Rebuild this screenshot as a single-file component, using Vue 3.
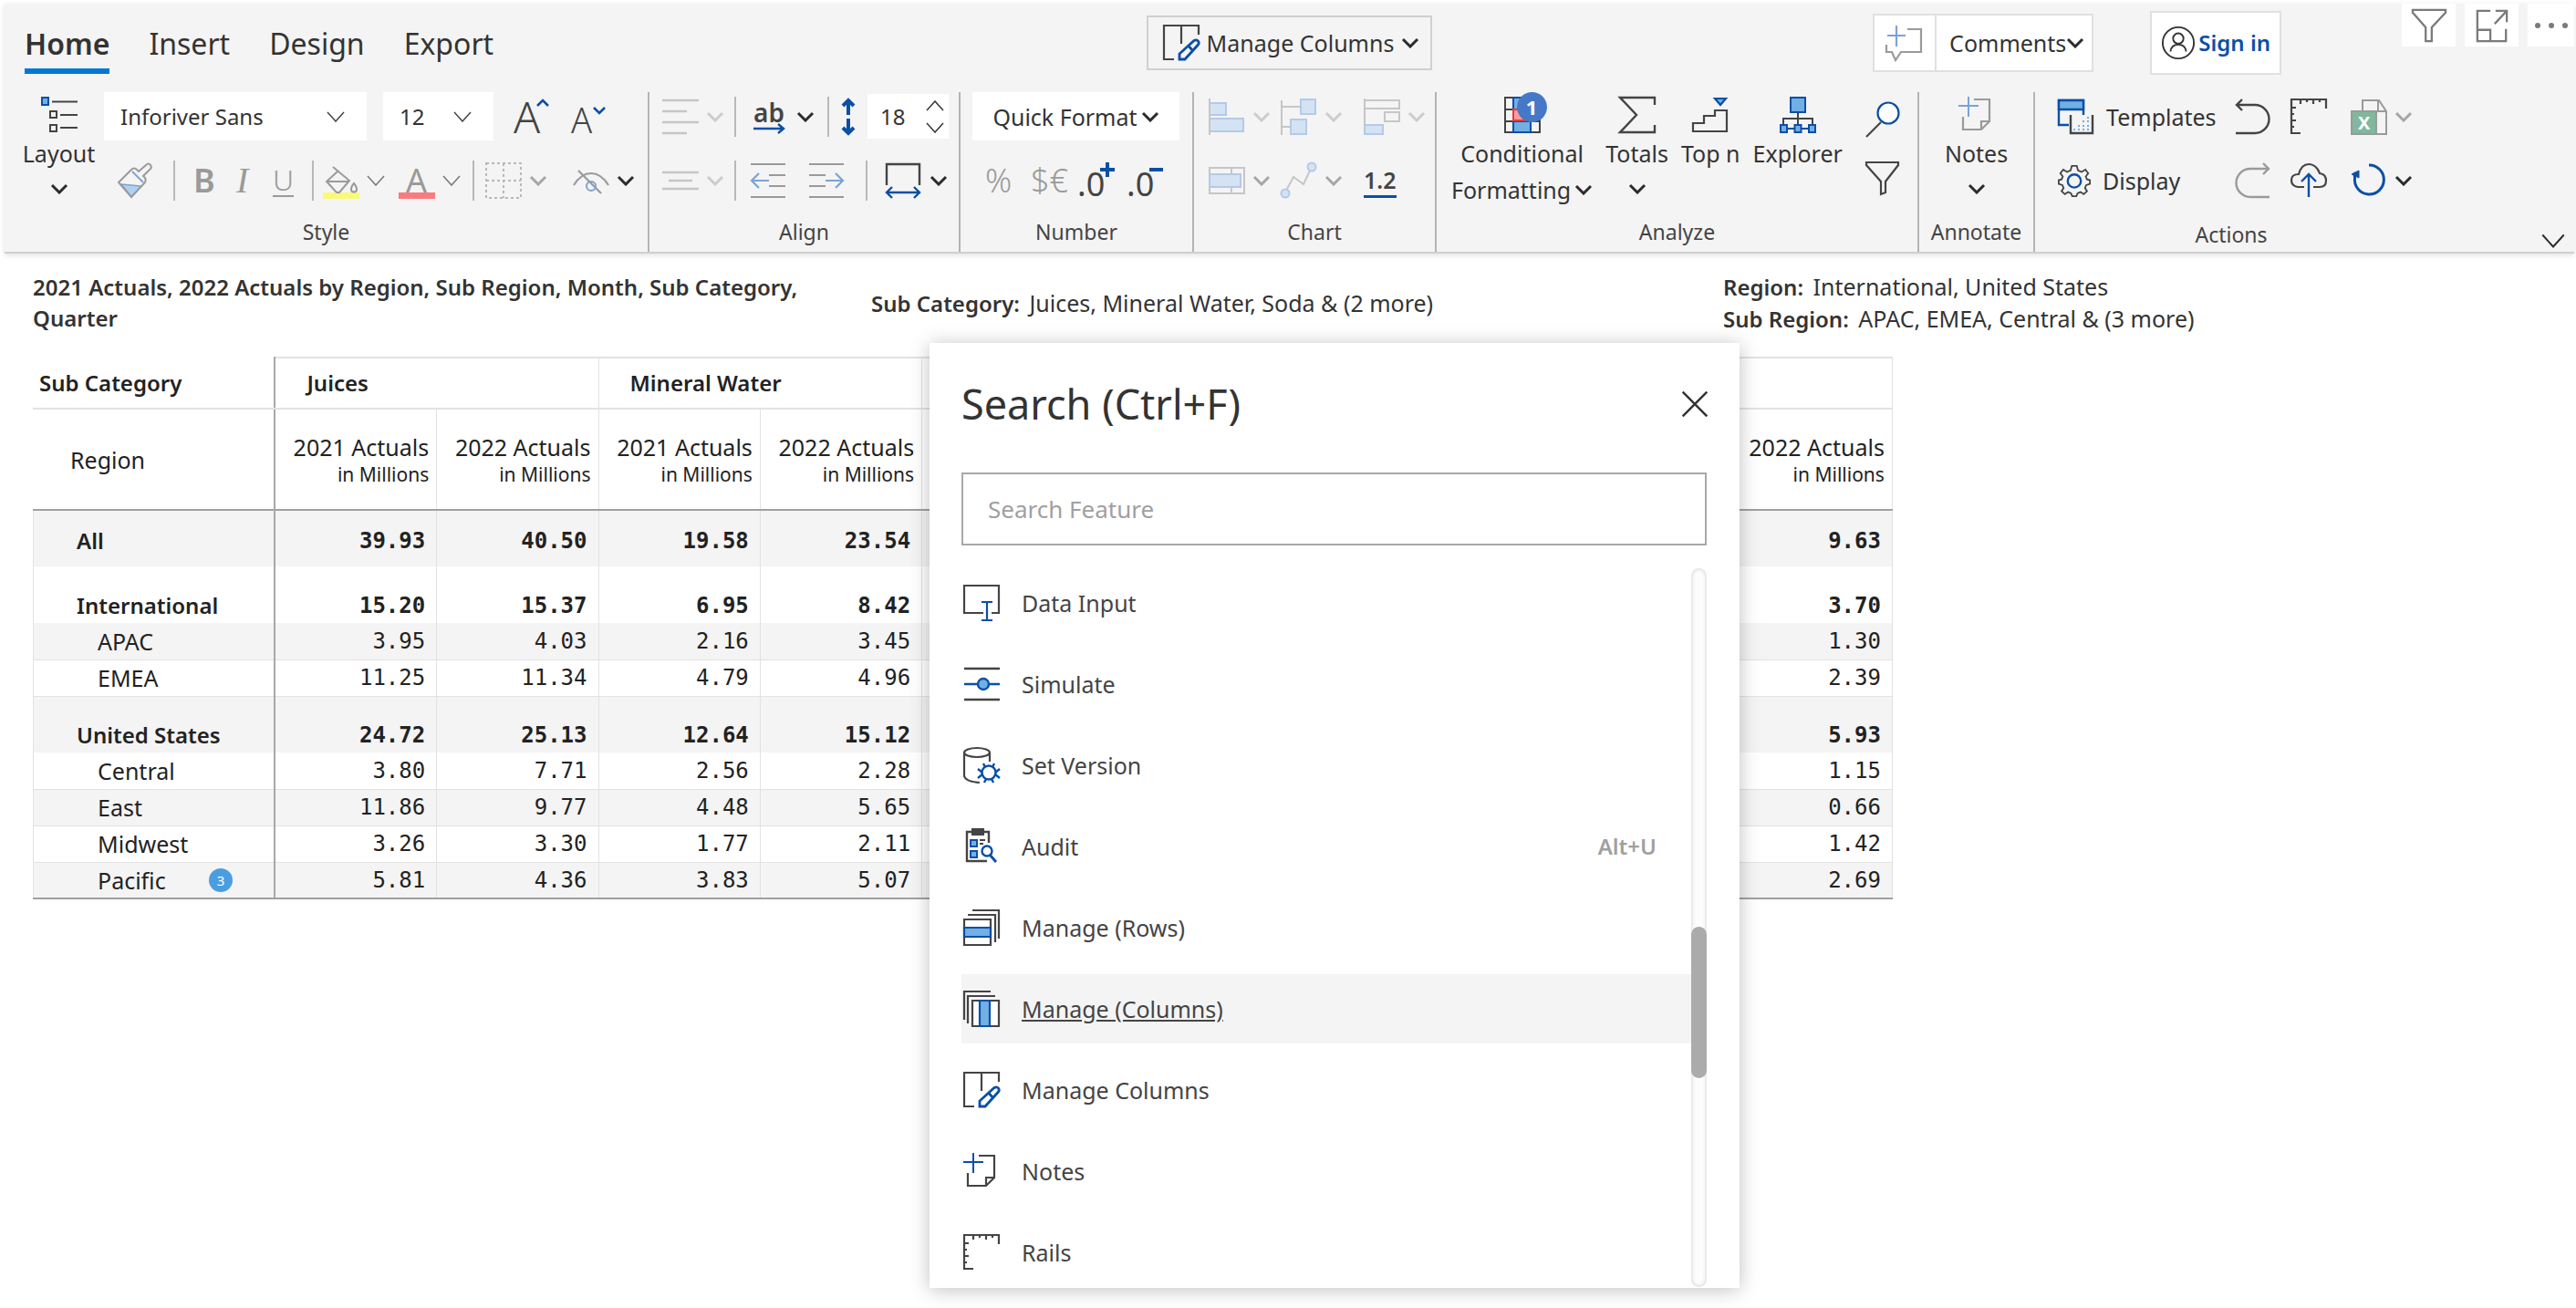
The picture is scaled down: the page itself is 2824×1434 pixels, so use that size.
<script setup>
import { h, ref } from 'vue'

const D = '#444'
const B = '#0b4fa6'
const L = '#71afe5'
const G = '#9a9a9a'
const GB = '#7ba3d4'
const dis = '#c6c6c6'
const disB = '#b4cae6'
const disL = '#d3e3f3'

const svgPath = (d, stroke = D, width = 2, fill = 'none') =>
  `<path d="${d}" stroke="${stroke}" stroke-width="${width}" fill="${fill}"/>`

const manageColumns =
  svgPath('M39 11V1H1V38H12M20 1V21', D, 2.2) +
  svgPath('M18 38V32L34 17.500Q37 16 38.500 18T38.500 22L24 38ZM28.500 24L33 29', B, 2.8)

const note = (a, b) =>
  svgPath('M17 3H34V27L25 36H5V22M25 36V27H34', a, 2.2) + svgPath('M11 0V22M0 10H22', b, 2)

const rails =
  svgPath('M11 38H1V1H39V11M11 1V6M18 1V4M25 1V6M32 1V4M1 10H6M1 17H4M1 24H6M1 31H4', D, 2.2)

const gearPath =
  'M17 2H23L24.500 7.500L29 9.500L33.500 6.500L37 11L34 15L35.500 18.500L39 19.500V24L34.500 25.500L33 29L35.500 33L31.500 36.500L27.500 34L24 35.500L22.500 39H17.500L16 35.500L12.500 34L8.500 36.500L4.500 33L7 29L5.500 25.500L1 24V19.500L4.500 18.500L6 15L3 11L6.500 6.500L11 9.500L15.500 7.500Z'

const icons = {
  layout:
    svgPath('M1 1H8V9H1Z', B, 2, L) +
    svgPath('M12 5.500H40M10 16H17V23H10ZM21 20H40M10 31H17V38H10ZM21 34H40', D),
  growA: `<text x="0" y="38" font-size="48" font-weight="300" fill="${D}">A</text>` + svgPath('M26 8L32 2L38 8', B, 2.6),
  shrinkA: `<text x="0" y="38" font-size="38" font-weight="300" fill="${D}">A</text>` + svgPath('M25 10L31 16L37 10', B, 2.6),
  brush:
    svgPath('M5 24L27 26L16 38Z', GB, 1.500, '#b0d0f0') +
    svgPath('M2 22L16 8Q19 5 22 8L24 10L32 3Q35 0 37 3Q39 6 36 8L29 15Q33 18 31 22L16 38Z', G) +
    svgPath('M17 10L29 22', GB),
  fill:
    `<rect x="0" y="33" width="40" height="7" fill="#fafa7a"/>` +
    svgPath('M11 5L29 20L18 33H15L4 21L16 10M4 21H28', G) +
    svgPath('M34 23Q29 29 32 32Q34 33 36 32Q39 29 34 23Z', G),
  fontColor:
    `<rect x="0" y="33" width="40" height="7" fill="#fa7b7f"/><text x="8" y="33" font-size="36" fill="${G}">A</text>`,
  borders: `<path d="M1 1H39V39H1ZM20 1V39M1 20H39" stroke="#b8b8b8" stroke-width="2" stroke-dasharray="3 3" fill="none"/>`,
  eye:
    svgPath('M1 25Q9 12 20 12T39 25M6 9L31 34', G, 2.2) +
    `<ellipse cx="20" cy="26" rx="5" ry="5" stroke="${GB}" stroke-width="2" fill="none"/>`,
  alignLeft: svgPath('M0 2H40M0 14H27M0 26H40M0 38H27', dis, 2.4),
  alignMid: svgPath('M0 11H40M7 20H33M0 29H40', dis, 2.4),
  ab:
    `<text x="1" y="26" font-size="28" font-weight="600" fill="${D}">ab</text>` +
    svgPath('M1 33H34M28 28L34 33L28 38', B, 2.4),
  updown:
    svgPath('M20 3V18M20 22V37M14 8L20 2L26 8M14 32L20 38L26 32', B, 4),
  outdent: svgPath('M0 2H38M20 14H38M20 26H38M0 38H38', G, 2.2) + svgPath('M1 20H20M9 12L1 20L9 28', GB, 2.2),
  indent: svgPath('M0 2H38M0 14H18M0 26H18M0 38H38', G, 2.2) + svgPath('M18 20H37M29 12L37 20L29 28', GB, 2.2),
  wrap: svgPath('M1 25V2H37V25', D, 2.4) + svgPath('M1 33H37M7 27L1 33L7 39M31 27L37 33L31 39', B, 2.4),
  decPlus: `<text x="0" y="37" font-size="36" fill="${D}">.0</text>` + svgPath('M33 0V16M25 8H41', B, 4),
  decMinus: `<text x="0" y="37" font-size="36" fill="${D}">.0</text>` + svgPath('M25 8H40', B, 4),
  bars: svgPath('M1 5H19V18H1ZM1 22H38V36H1Z', disB, 2, disL) + svgPath('M1 0V40', dis),
  boxes: svgPath('M1 2V40M1 9H22M1 31H11', dis) + svgPath('M22 1H38V17H22ZM11 23H28V39H11Z', disB, 2, disL),
  gantt: svgPath('M1 0V40M1 2H39V11H1M23 15H39V25H23Z', dis) + svgPath('M1 29H21V39H1Z', disB, 2, disL),
  table: svgPath('M1 6H39V34H1ZM25 6V34', dis) + svgPath('M1 13H35V27H1Z', disB, 2, disL),
  line:
    svgPath('M6 31L14 16L25 24L32 9', dis) +
    `<circle cx="34" cy="5" r="4.500" stroke="${disB}" stroke-width="2" fill="${disL}"/><circle cx="5" cy="34" r="4.500" stroke="${disB}" stroke-width="2" fill="${disL}"/>`,
  cond:
    svgPath('M1 1H39V39H1ZM1 14H39M1 27H39', D) +
    svgPath('M10 1H29V14H10ZM10 27H29V39H10Z', B, 2, L) +
    svgPath('M10 14H24V26H10Z', '#e8383d', 2, '#ff9a9a'),
  sigma: svgPath('M39 9V1H1L19 20L1 39H39V31', D, 2.4),
  topn: svgPath('M1 38V29H13V21H25V15H38V38Z', D, 2.2) + svgPath('M25 2H37L31 9Z', B, 2.2, L),
  explorer:
    svgPath('M20 18V32M4 31V24H36V31', D) +
    svgPath('M4 35H36', B) +
    svgPath('M12 1H28V17H12ZM1 31H8V39H1ZM16.500 31H23.500V39H16.500ZM32 31H39V39H32Z', B, 2, L),
  search: svgPath('M2 39L18 23', D, 2.2) + `<circle cx="26" cy="13" r="11.500" stroke="${B}" stroke-width="2.200" fill="#fff"/>`,
  funnel: svgPath('M2 3H37V6L23 24V36L18 38V24L2 6Z', D, 2.2),
  noteGray: note(G, GB),
  note: note(D, B),
  templates:
    svgPath('M12 29H1V2H28V18', B, 2.4) + svgPath('M1 2H28V12H1Z', B, 2.4, L) +
    svgPath('M14 18V38H38V18', D, 2.4) +
    `<path d="M17 34H36M22 30H36M27 25H36M32 21H36" stroke="${L}" stroke-width="2" stroke-dasharray="2 3" fill="none"/>`,
  gear: svgPath(gearPath, D, 2) + `<circle cx="20" cy="20.500" r="8" stroke="${B}" stroke-width="2.600" fill="none"/>`,
  undo: svgPath('M8 1L2 7L8 13M2 7H22A15.500 15.500 0 0 1 22 38H1', D, 2.4),
  redo: svgPath('M31 1L37 7L31 13M37 7H17A15.500 15.500 0 0 0 17 38H38', G, 2.4),
  rails,
  excel:
    svgPath('M13 14V2H31L39 14V39H14M30 2V14H39', G, 2) +
    `<rect x="1" y="14" width="27" height="25" fill="#7fb89d" stroke="${G}" stroke-width="2"/><text x="8" y="34" font-size="20" font-weight="700" fill="#fff">X</text>`,
  cloud:
    svgPath('M15 27H8Q1 26 1 19.500T9 13Q12 2 20 2T32 12Q39 13 39 20T32 27H25', D, 2.2) +
    svgPath('M20 38V13M12 21L20 13L28 21', B, 2.4),
  refresh: svgPath('M20 3A16 16 0 1 1 4.500 17Q4 14 5 11', B, 3) + svgPath('M1 13L9 9V17Z', B, 1, B),
  comment: svgPath('M24 5H39V30H17L11 39L7 30H1V22', G, 2.2) + svgPath('M12 1V24M2 12H22', GB, 2.2),
  user:
    `<circle cx="20" cy="20" r="18" stroke="#333" stroke-width="2" fill="none"/><circle cx="20" cy="15" r="6" stroke="#333" stroke-width="2" fill="none"/>` +
    svgPath('M11 30Q12 22 20 22T29 30', '#333'),
  filterGray: svgPath('M1 2H39V5L23 22V38H16V22L1 5Z', '#7a7a7a', 2.4),
  expand: svgPath('M18 3H3V38H36V24M3 25H18V38M24 3H37V16M37 3L23 18', '#7a7a7a', 2.4),
  close: svgPath('M6 6L34 34M34 6L6 34', '#333', 2.6),
  manageColumns,
  dataInput:
    svgPath('M22 31H1V1H39V31H31', D, 2.2) + svgPath('M26 19V38M20 19H32M20 39H32', B, 2.2),
  simulate:
    svgPath('M1 3H40M1 37H40', D, 2.4) + svgPath('M1 20H40', B, 2.4) +
    `<circle cx="22" cy="20" r="6" stroke="${B}" stroke-width="2.400" fill="${L}"/>`,
  version:
    svgPath('M1 6V32Q3 38 18 39M29 6V16', D, 2.2) +
    `<ellipse cx="15" cy="6" rx="14" ry="5" stroke="${D}" stroke-width="2.200" fill="none"/><circle cx="28" cy="28" r="7.500" stroke="${B}" stroke-width="2.400" fill="none"/>` +
    svgPath('M24 22L22 18M32 22L34 18M21 28L16 24M35 28L40 24M21 30L16 34M35 30L40 34M25 35L23 39M31 35L33 39', B, 2.4),
  audit:
    svgPath('M26 36H4V4H28V16', D, 2.4) + `<rect x="9" y="0" width="14" height="8" fill="${D}"/>` +
    svgPath('M8 13H15V20H8ZM8 25H15V32H8Z', B, 2, L) + svgPath('M18 13H24M18 17H22', D) +
    `<circle cx="26" cy="25" r="5.500" stroke="${B}" stroke-width="2.400" fill="none"/>` + svgPath('M29 29L36 37', B, 2.8),
  manageRows:
    svgPath('M10 1H39V32M5 6H35V36', D, 2.2) + svgPath('M1 11H30V39H1Z', D, 2.2, '#fff') +
    svgPath('M1 20H30V30H1Z', B, 2.2, L),
  manageCols:
    svgPath('M1 32V1H30M5 36V6H35', D, 2.2) + svgPath('M10 11H39V39H10Z', D, 2.2, '#fff') +
    svgPath('M18 11H29V39H18Z', B, 2.2, L)
}

const Ico = (p) => h('svg', {
  viewBox: '0 0 40 40', width: p.size || 40, height: p.size || 40,
  'aria-hidden': 'true', overflow: 'visible', innerHTML: icons[p.name]
})
Ico.props = ['name', 'size']

const Chev = (p) => h('svg', {
  viewBox: '0 0 20 12', width: 20, height: 12, 'aria-hidden': 'true', fill: 'none',
  stroke: p.color || '#2b2b2b', 'stroke-width': p.thin ? 1.5 : 3
}, [h('path', { d: p.up ? 'M1 11L10 1L19 11' : p.thin ? 'M1 1L10 11L19 1' : 'M2 2L10 10L18 2' })])
Chev.props = { color: String, thin: Boolean, up: Boolean }

const tabs = ['Home', 'Insert', 'Design', 'Export']
const query = ref('')

const features = [
  { icon: 'dataInput', label: 'Data Input' },
  { icon: 'simulate', label: 'Simulate' },
  { icon: 'version', label: 'Set Version' },
  { icon: 'audit', label: 'Audit', key: 'Alt+U' },
  { icon: 'manageRows', label: 'Manage (Rows)' },
  { icon: 'manageCols', label: 'Manage (Columns)', active: true },
  { icon: 'manageColumns', label: 'Manage Columns' },
  { icon: 'note', label: 'Notes' },
  { icon: 'rails', label: 'Rails' }
]

const categories = ['Juices', 'Mineral Water', '', '', '']
const measures = ['2021 Actuals', '2022 Actuals', '2021 Actuals', '2022 Actuals', '', '', '', '', '', '2022 Actuals']
const rows = [
  { name: 'All', kind: 'total', v: ['39.93', '40.50', '19.58', '23.54', '9.63'] },
  { name: 'International', kind: 'parent', v: ['15.20', '15.37', '6.95', '8.42', '3.70'] },
  { name: 'APAC', v: ['3.95', '4.03', '2.16', '3.45', '1.30'] },
  { name: 'EMEA', v: ['11.25', '11.34', '4.79', '4.96', '2.39'] },
  { name: 'United States', kind: 'parent', v: ['24.72', '25.13', '12.64', '15.12', '5.93'] },
  { name: 'Central', v: ['3.80', '7.71', '2.56', '2.28', '1.15'] },
  { name: 'East', v: ['11.86', '9.77', '4.48', '5.65', '0.66'] },
  { name: 'Midwest', v: ['3.26', '3.30', '1.77', '2.11', '1.42'] },
  { name: 'Pacific', badge: 3, v: ['5.81', '4.36', '3.83', '5.07', '2.69'] }
]
const cell = (row, i) => (i < 4 ? row.v[i] : i === 9 ? row.v[4] : '')
</script>

<template>
  <div class="page">
    <header class="ribbon">
      <div class="topbar">
        <nav class="tabs">
          <a v-for="(t, i) in tabs" :key="t" href="#" :class="{ current: i === 0 }">{{ t }}</a>
        </nav>
        <button class="manage"><Ico name="manageColumns" />Manage Columns<Chev /></button>
        <div class="account">
          <div class="comments">
            <button class="add" aria-label="Add comment"><Ico name="comment" /></button>
            <button class="list-btn">Comments<Chev /></button>
          </div>
          <button class="signin"><Ico name="user" size="38" />Sign in</button>
          <div class="tools">
            <button aria-label="Filter"><Ico name="filterGray" size="38" /></button>
            <button aria-label="Focus mode"><Ico name="expand" size="38" /></button>
            <button class="more" aria-label="More options"><i></i><i></i><i></i></button>
          </div>
        </div>
      </div>

      <div class="groups">
        <section class="group g-style">
          <button class="tall"><Ico name="layout" /><span>Layout</span><Chev /></button>
          <div class="stack">
            <div class="row r1 style-1">
              <label class="pick font"><select aria-label="Font"><option>Inforiver Sans</option></select><Chev thin color="#444" /></label>
              <label class="pick size"><select aria-label="Font size"><option>12</option></select><Chev thin color="#444" /></label>
              <button aria-label="Grow font"><Ico name="growA" /></button>
              <button aria-label="Shrink font"><Ico name="shrinkA" /></button>
            </div>
            <div class="row r2 style-2">
              <button aria-label="Format painter"><Ico name="brush" /></button>
              <i class="sep"></i>
              <button class="glyph bold">B</button>
              <button class="glyph italic">I</button>
              <button class="glyph under">U</button>
              <i class="sep"></i>
              <button aria-label="Fill colour"><Ico name="fill" /><Chev thin color="#777" /></button>
              <button aria-label="Font colour"><Ico name="fontColor" /><Chev thin color="#777" /></button>
              <i class="sep"></i>
              <button aria-label="Borders"><Ico name="borders" /><Chev color="#a6a6a6" /></button>
              <button aria-label="Hide"><Ico name="eye" /><Chev /></button>
            </div>
          </div>
          <h2>Style</h2>
        </section>

        <section class="group g-align">
          <div class="stack">
            <div class="row r1 align-1">
              <button aria-label="Horizontal align"><Ico name="alignLeft" /><Chev color="#ccc" /></button>
              <i class="sep"></i>
              <button aria-label="Text direction"><Ico name="ab" /><Chev /></button>
              <i class="sep"></i>
              <Ico name="updown" />
              <div class="spin">
                <input aria-label="Row height" value="18" />
                <span><Chev thin up color="#333" /><Chev thin color="#333" /></span>
              </div>
            </div>
            <div class="row r2 align-2">
              <button aria-label="Vertical align"><Ico name="alignMid" /><Chev color="#ccc" /></button>
              <i class="sep"></i>
              <button aria-label="Outdent"><Ico name="outdent" /></button>
              <button aria-label="Indent"><Ico name="indent" /></button>
              <i class="sep"></i>
              <button aria-label="Column width"><Ico name="wrap" /><Chev /></button>
            </div>
          </div>
          <h2>Align</h2>
        </section>

        <section class="group g-number">
          <div class="stack">
            <div class="row r1 number-1">
              <button class="quick">Quick Format<Chev /></button>
            </div>
            <div class="row r2 number-2">
              <button class="glyph">%</button>
              <button class="glyph">$€</button>
              <button aria-label="More decimals"><Ico name="decPlus" /></button>
              <button aria-label="Fewer decimals"><Ico name="decMinus" /></button>
            </div>
          </div>
          <h2>Number</h2>
        </section>

        <section class="group g-chart">
          <div class="stack">
            <div class="row r1 chart-row">
              <button aria-label="Bar chart"><Ico name="bars" /><Chev color="#ccc" /></button>
              <button aria-label="Variance chart"><Ico name="boxes" /><Chev color="#ccc" /></button>
              <button aria-label="Gantt chart"><Ico name="gantt" /><Chev color="#ccc" /></button>
            </div>
            <div class="row r2 chart-row">
              <button aria-label="Table style"><Ico name="table" /><Chev color="#a6a6a6" /></button>
              <button aria-label="Sparkline"><Ico name="line" /><Chev color="#a6a6a6" /></button>
              <button class="labels">1.2</button>
            </div>
          </div>
          <h2>Chart</h2>
        </section>

        <section class="group g-analyze">
          <div class="talls">
            <button class="tall">
              <span class="badged"><Ico name="cond" /><b>1</b></span>
              <span>Conditional</span>
              <span class="with-chev">Formatting<Chev /></span>
            </button>
            <button class="tall"><Ico name="sigma" /><span>Totals</span><Chev /></button>
            <button class="tall"><Ico name="topn" /><span>Top n</span></button>
            <button class="tall"><Ico name="explorer" /><span>Explorer</span></button>
            <div class="pair">
              <button aria-label="Search"><Ico name="search" /></button>
              <button aria-label="Filter rows"><Ico name="funnel" /></button>
            </div>
          </div>
          <h2>Analyze</h2>
        </section>

        <section class="group g-annotate">
          <button class="tall"><Ico name="noteGray" /><span>Notes</span><Chev /></button>
          <h2>Annotate</h2>
        </section>

        <section class="group g-actions">
          <div class="stack">
            <div class="row r1 actions-row">
              <button class="wide"><Ico name="templates" />Templates</button>
              <button aria-label="Undo"><Ico name="undo" /></button>
              <button aria-label="Rails"><Ico name="rails" /></button>
              <button aria-label="Export to Excel"><Ico name="excel" /><Chev color="#a6a6a6" /></button>
            </div>
            <div class="row r2 actions-row">
              <button class="wide"><Ico name="gear" size="36" />Display</button>
              <button aria-label="Redo"><Ico name="redo" /></button>
              <button aria-label="Save to cloud"><Ico name="cloud" /></button>
              <button aria-label="Refresh"><Ico name="refresh" /><Chev /></button>
            </div>
          </div>
          <h2>Actions</h2>
        </section>
        <button class="collapse" aria-label="Collapse ribbon"><Chev thin /></button>
      </div>
    </header>

    <main>
      <div class="captions">
        <h1>2021 Actuals, 2022 Actuals by Region, Sub Region, Month, Sub Category, Quarter</h1>
        <p class="c-mid"><b>Sub Category:</b> Juices, Mineral Water, Soda &amp; (2 more)</p>
        <div>
          <p><b>Region:</b> International, United States</p>
          <p><b>Sub Region:</b> APAC, EMEA, Central &amp; (3 more)</p>
        </div>
      </div>

      <table>
        <colgroup><col class="first" /><col v-for="n in 10" :key="n" /></colgroup>
        <thead>
          <tr class="cats">
            <th scope="col">Sub Category</th>
            <th v-for="(c, i) in categories" :key="i" colspan="2" scope="colgroup">{{ c }}</th>
          </tr>
          <tr class="meas">
            <th scope="col">Region</th>
            <th v-for="(m, i) in measures" :key="i" scope="col">
              <template v-if="m">{{ m }}<small>in Millions</small></template>
            </th>
          </tr>
        </thead>
        <tbody>
          <tr v-for="row in rows" :key="row.name" :class="row.kind || 'leaf'">
            <th scope="row"><span class="name">{{ row.name }}<em v-if="row.badge">{{ row.badge }}</em></span></th>
            <td v-for="i in 10" :key="i">{{ cell(row, i - 1) }}</td>
          </tr>
        </tbody>
      </table>
    </main>

    <aside class="popup" role="dialog" aria-label="Search">
      <div class="popup-head">
        <h2>Search (Ctrl+F)</h2>
        <button aria-label="Close"><Ico name="close" size="38" /></button>
      </div>
      <input v-model="query" type="text" placeholder="Search Feature" aria-label="Search Feature" />
      <div class="results">
        <ul>
          <li v-for="f in features" :key="f.label">
            <button :class="{ active: f.active }">
              <Ico :name="f.icon" /><span>{{ f.label }}</span><kbd v-if="f.key">{{ f.key }}</kbd>
            </button>
          </li>
        </ul>
        <div class="track"><div class="thumb"></div></div>
      </div>
    </aside>
  </div>
</template>

<style>
body {
  margin: 0;
  background: #fff;
}
</style>

<style scoped>
.page {
  position: relative;
  min-height: 100vh;
  overflow: hidden;
  color: #333;
  font: 25px/34px "Noto Sans", "Open Sans", sans-serif;
}
.page * {
  box-sizing: border-box;
}
button,
input,
select {
  margin: 0;
  padding: 0;
  border: 0;
  background: none;
  color: inherit;
  font: inherit;
}
button {
  display: inline-flex;
  align-items: center;
  gap: 8px;
  white-space: nowrap;
}
svg {
  flex: none;
}
h1,
h2,
p,
ul {
  margin: 0;
  padding: 0;
  list-style: none;
}

/* Ribbon */
.ribbon {
  margin: 4px 2px 0 5px;
  background: #f4f4f4;
  border-bottom: 2px solid #d0d0d0;
  box-shadow: 0 2px 6px rgba(0, 0, 0, 0.12);
}
.topbar {
  display: grid;
  grid-template-columns: 1fr auto 1fr;
  align-items: center;
  height: 86px;
}
.tabs {
  display: flex;
  gap: 43px;
  padding-left: 22px;
  font-size: 32px;
  line-height: 50px;
}
.tabs a {
  padding: 10px 0 2px;
  border-bottom: 6px solid transparent;
  color: #333;
  text-decoration: none;
}
.tabs .current {
  border-color: #0078d4;
  font-weight: 600;
}
.manage {
  height: 60px;
  padding: 0 12px 0 16px;
  border: 2px solid #d0d0d0;
}
.account {
  display: flex;
  align-items: center;
  align-self: stretch;
  justify-content: flex-end;
}
.comments {
  display: flex;
  height: 64px;
  margin-right: 62px;
  border: 2px solid #e0e0e0;
  background: #fff;
}
.add {
  padding: 0 14px 0 12px;
  border-right: 2px solid #e0e0e0;
}
.list-btn {
  gap: 0;
  padding: 0 8px 0 14px;
}
.signin {
  height: 70px;
  margin-right: 132px;
  gap: 3px;
  padding: 0 10px;
  border: 2px solid #e0e0e0;
  background: #fff;
  color: #0b4fa6;
  font-size: 24px;
  font-weight: 600;
}
.tools {
  display: flex;
  align-self: flex-start;
  gap: 10px;
}
.tools button {
  width: 59px;
  height: 47px;
  justify-content: center;
  background: #fff;
}
.tools .more {
  width: 51px;
  gap: 9px;
}
.more i {
  width: 6px;
  height: 6px;
  border-radius: 50%;
  background: #7a7a7a;
}
.groups {
  display: flex;
  padding-top: 11px;
}
.group {
  display: grid;
  grid-template-rows: 136px 39px;
  border-right: 2px solid #b4b4b4;
}
.group h2 {
  grid-column: 1 / -1;
  color: #444;
  font-size: 23px;
  font-weight: 400;
  text-align: center;
}
.row {
  display: grid;
  align-items: center;
  justify-items: start;
}
.r1 {
  height: 53px;
  margin-bottom: 22px;
}
.r2 {
  height: 44px;
}
.sep {
  width: 2px;
  height: 44px;
  background: #b8b8b8;
}
.tall {
  flex-direction: column;
  gap: 0;
  padding-top: 5px;
}
.tall > span {
  line-height: 40px;
}
.tall > svg + span {
  margin: 2px 0 13px;
}
.g-style {
  grid-template-columns: 109px 596px;
}
.g-style .tall {
  padding-left: 10px;
}
.style-1 {
  grid-template-columns: 306px 143px 63px 40px;
}
.style-2 {
  grid-template-columns: 62px 22px 42px 45px 43px 12px 83px 81px 14px 96px 66px;
  padding-left: 14px;
}
.pick {
  display: flex;
  align-items: center;
  height: 53px;
  padding: 0 24px 0 18px;
  background: #fff;
  font-size: 24px;
}
.pick select {
  flex: 1;
  min-width: 0;
  appearance: none;
}
.font {
  width: 288px;
}
.size {
  width: 121px;
}
.glyph {
  color: #9a9a9a;
  font-size: 36px;
  font-weight: 300;
}
.bold {
  font-weight: 600;
}
.italic {
  padding-left: 5px;
  font-family: "Liberation Serif", serif;
  font-size: 40px;
  font-style: italic;
}
.under {
  border-bottom: 2px solid #9a9a9a;
  font-size: 32px;
}
.g-align {
  grid-template-columns: 339px;
}
.align-1 {
  grid-template-columns: 79px 20px 82px 3px 41px 89px;
  padding-left: 14px;
}
.align-2 {
  grid-template-columns: 79px 18px 64px 62px 22px 66px;
  padding-left: 14px;
}
.spin {
  display: flex;
  width: 89px;
  height: 49px;
  background: #fff;
}
.spin input {
  width: 64px;
  padding-left: 14px;
  font-size: 24px;
}
.spin span {
  display: flex;
  flex-direction: column;
  justify-content: center;
  gap: 12px;
}
.g-number {
  grid-template-columns: 254px;
}
.number-1 {
  padding-left: 13px;
}
.number-2 {
  grid-template-columns: 50px 51px 54px 40px;
  padding-left: 27px;
}
.quick {
  width: 227px;
  height: 53px;
  gap: 4px;
  justify-content: center;
  background: #fff;
}
.g-chart {
  grid-template-columns: 264px;
}
.chart-row {
  grid-template-columns: 79px 91px 68px;
  padding-left: 16px;
}
.labels {
  border-bottom: 3px solid #0b4fa6;
  color: #444;
  font-weight: 600;
}
.g-analyze {
  grid-template-columns: 527px;
}
.talls {
  display: flex;
  align-items: flex-start;
  gap: 14px;
  padding-left: 16px;
}
.talls .badged + span {
  margin-top: 2px;
}
.with-chev {
  display: flex;
  align-items: center;
  gap: 4px;
}
.badged {
  position: relative;
  height: 40px;
}
.badged b {
  position: absolute;
  top: -5px;
  left: 14px;
  width: 33px;
  height: 33px;
  border-radius: 50%;
  background: #4678c8;
  color: #fff;
  font-size: 22px;
  line-height: 33px;
}
.pair {
  display: flex;
  flex-direction: column;
  gap: 24px;
  padding: 10px 0 0 10px;
}
.g-annotate {
  grid-template-columns: 125px;
}
.g-actions {
  grid-template-columns: 430px;
  border: 0;
}
.g-actions h2 {
  padding-top: 3px;
}
.actions-row {
  grid-template-columns: 194px 61px 66px 68px;
  padding-left: 25px;
}
.wide {
  gap: 13px;
}
.collapse {
  margin: auto 10px 4px auto;
}
.collapse svg {
  width: 26px;
  height: 16px;
}

/* Report */
.captions {
  display: grid;
  grid-template-columns: 880px 895px 1fr;
  align-items: center;
  padding: 19px 0 24px 36px;
}
.captions > * {
  padding-right: 34px;
}
.captions h1 {
  font-size: 24px;
  font-weight: 600;
}
.captions .c-mid {
  padding-left: 39px;
}
.captions b {
  margin-right: 4px;
  font-size: 24px;
  font-weight: 600;
}
.captions > div {
  padding-left: 78px;
}
table {
  width: 72.200%;
  margin-left: 36px;
  border-collapse: collapse;
  table-layout: fixed;
  color: #222;
}
.first {
  width: 13%;
}
th,
td {
  padding: 0;
  border: 1px solid #e2e2e2;
}
.cats th {
  height: 56px;
  padding-left: 34px;
  border-width: 2px 1px;
  font-size: 24px;
  font-weight: 600;
  text-align: left;
}
.meas th {
  height: 111px;
  padding-right: 8px;
  font-weight: 400;
  line-height: 32px;
  text-align: right;
}
.meas small {
  display: block;
  font-size: 21px;
  line-height: 28px;
}
table tr > :first-child {
  border-right: 2px solid #a8a8a8;
  text-align: left;
}
.cats th:first-child {
  padding-left: 6px;
  border-top-color: transparent;
}
.meas th:first-child {
  padding-left: 40px;
}
thead th:first-child {
  border-left-color: transparent;
}
tbody tr:first-child > * {
  border-top: 2px solid #a0a0a0;
}
tbody tr:nth-child(odd) {
  background: #f4f4f4;
}
tbody th {
  padding-left: 70px;
  font-weight: 400;
}
tbody td {
  padding-right: 12px;
  font: 24px/34px "DejaVu Sans Mono", monospace;
  text-align: right;
}
.leaf > * {
  height: 40px;
}
.total > * {
  height: 62px;
  padding-top: 4px;
  border-bottom: 0;
}
.parent > * {
  height: 62px;
  padding-top: 23px;
  border-bottom: 0;
}
.total th,
.parent th {
  padding-left: 47px;
  font-size: 24px;
  font-weight: 600;
}
.total td,
.parent td {
  font-weight: 700;
}
.parent + .leaf > *,
.total + .parent > * {
  border-top: 0;
}
tbody tr:nth-child(4),
tbody tr:nth-child(8) {
  background: #fff;
}
tbody tr:last-child > * {
  border-bottom: 2px solid #a0a0a0;
}
.name {
  position: relative;
}
.name em {
  position: absolute;
  top: 4px;
  left: 122px;
  width: 26px;
  height: 26px;
  border-radius: 50%;
  background: #4a9ee0;
  color: #fff;
  font-size: 15px;
  font-style: normal;
  line-height: 26px;
  text-align: center;
}

/* Search window */
.popup {
  position: absolute;
  top: 376px;
  left: 1019px;
  width: 888px;
  padding: 35px 36px 1px 35px;
  background: #fff;
  box-shadow: 0 2px 20px rgba(0, 0, 0, 0.25);
}
.popup-head {
  display: flex;
  align-items: center;
  justify-content: space-between;
  margin-bottom: 43px;
}
.popup-head h2 {
  font-size: 45px;
  font-weight: 400;
  line-height: 64px;
}
.popup-head button {
  margin-right: -6px;
}
.popup > input {
  display: block;
  width: 100%;
  height: 80px;
  padding: 0 27px;
  border: 2px solid #a8a8a8;
  font-size: 26px;
}
.popup > input::placeholder {
  color: #a0a0a0;
}
.results {
  display: flex;
  margin-top: 25px;
}
.results ul {
  display: flex;
  flex: 1;
  flex-direction: column;
  gap: 13px;
}
.results li button {
  width: 100%;
  height: 76px;
  gap: 24px;
  padding-left: 2px;
  color: #444;
}
.results .active {
  background: #f4f4f4;
}
.active span {
  text-decoration: underline;
}
kbd {
  margin: 0 38px 0 auto;
  color: #a0a0a0;
  font: inherit;
  font-size: 24px;
  font-weight: 600;
}
.track {
  width: 17px;
  border-radius: 9px;
  padding-top: 393px;
  background: #fdfdfd;
  box-shadow: inset 0 0 5px rgba(0, 0, 0, 0.2);
}
.thumb {
  height: 166px;
  border-radius: 9px;
  background: #ababab;
}
</style>
